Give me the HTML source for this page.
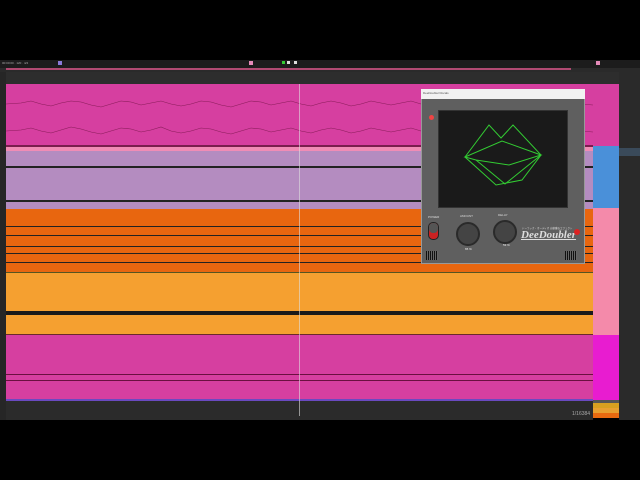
<!DOCTYPE html>
<html><head><meta charset="utf-8"><style>
*{margin:0;padding:0;box-sizing:border-box}
body{width:640px;height:480px;background:#000;position:relative;overflow:hidden;font-family:"Liberation Sans","Noto Sans CJK JP",sans-serif}
.a{position:absolute}
.t{font-size:3px;color:#aaa}
</style></head><body>
<div class="a" style="left:0;top:60px;width:640px;height:8px;background:#1c1c1c"></div>
<div class="a t" style="left:2px;top:61px">00:00:00 · 120 · 4/4</div>
<div class="a" style="left:58px;top:61px;width:4px;height:4px;background:#8a7ad8"></div>
<div class="a" style="left:249px;top:61px;width:4px;height:4px;background:#e48ab8"></div>
<div class="a" style="left:282px;top:61px;width:3px;height:3px;background:#3c3"></div>
<div class="a" style="left:287px;top:61px;width:3px;height:3px;background:#ddd"></div>
<div class="a" style="left:294px;top:61px;width:3px;height:3px;background:#ddd"></div>
<div class="a" style="left:596px;top:61px;width:4px;height:4px;background:#e48ab8"></div>
<div class="a" style="left:0;top:68px;width:640px;height:4px;background:#2a2a2a"></div>
<div class="a" style="left:6px;top:68px;width:565px;height:2px;background:#b04a72"></div>
<div class="a" style="left:0;top:72px;width:640px;height:12px;background:#2d2d2d"></div>
<div class="a" style="left:0;top:72px;width:6px;height:348px;background:#262626"></div>
<div class="a" style="left:6px;top:84px;width:587px;height:62px;background:#d63fa0"></div>
<svg class="a" style="left:6px;top:84px" width="587" height="62"><path d="M0 20 L15 19 L25 17 L35 20 L45 22 L55 19 L65 17 L75 18 L85 21 L95 23 L105 20 L115 17 L125 18 L135 21 L145 19 L155 17 L165 20 L175 22 L185 20 L195 17 L205 18 L215 21 L225 23 L235 20 L245 17 L255 18 L265 21 L275 19 L285 17 L295 20 L305 22 L315 19 L325 17 L335 19 L345 22 L355 20 L365 17 L375 19 L385 21 L395 19 L405 17 L415 20 L425 22 L435 19 L445 17 L455 20 L465 22 L475 19 L485 17 L495 19 L505 21 L515 19 L525 17 L535 20 L545 22 L555 19 L565 17 L575 20 L587 21" stroke="#8a1d5a" stroke-width=".6" fill="none"/><path d="M0 47 L15 46 L25 44 L35 47 L45 49 L55 46 L65 43 L75 45 L85 48 L95 50 L105 47 L115 44 L125 45 L135 48 L145 46 L155 43 L165 47 L175 49 L185 47 L195 44 L205 45 L215 48 L225 50 L235 47 L245 44 L255 45 L265 48 L275 46 L285 44 L295 47 L305 49 L315 46 L325 44 L335 46 L345 49 L355 47 L365 44 L375 46 L385 48 L395 46 L405 44 L415 47 L425 49 L435 46 L445 44 L455 47 L465 49 L475 46 L485 44 L495 46 L505 48 L515 46 L525 44 L535 47 L545 49 L555 46 L565 44 L575 47 L587 48" stroke="#8a1d5a" stroke-width=".6" fill="none"/></svg>
<div class="a" style="left:6px;top:145px;width:587px;height:2px;background:#7a1e4e"></div>
<div class="a" style="left:6px;top:147px;width:587px;height:4px;background:#f08cb5"></div>
<div class="a" style="left:6px;top:151px;width:587px;height:58px;background:#b48cc0"></div>
<div class="a" style="left:6px;top:166px;width:587px;height:2px;background:#222"></div>
<div class="a" style="left:6px;top:200px;width:587px;height:2px;background:#222"></div>
<div class="a" style="left:6px;top:209px;width:587px;height:64px;background:#e8660f"></div>
<div class="a" style="left:6px;top:226px;width:587px;height:1px;background:#222"></div>
<div class="a" style="left:6px;top:235px;width:587px;height:1px;background:#222"></div>
<div class="a" style="left:6px;top:246px;width:587px;height:1px;background:#222"></div>
<div class="a" style="left:6px;top:253px;width:587px;height:1px;background:#222"></div>
<div class="a" style="left:6px;top:262px;width:587px;height:1px;background:#222"></div>
<div class="a" style="left:6px;top:272px;width:587px;height:1px;background:#552"></div>
<div class="a" style="left:6px;top:273px;width:587px;height:62px;background:#f5a030"></div>
<div class="a" style="left:6px;top:311px;width:587px;height:4px;background:#1a1a1a"></div>
<div class="a" style="left:6px;top:334px;width:587px;height:1px;background:#6a2a2a"></div>
<div class="a" style="left:6px;top:335px;width:587px;height:65px;background:#d63fa0"></div>
<div class="a" style="left:6px;top:374px;width:587px;height:1px;background:#6a1040"></div>
<div class="a" style="left:6px;top:380px;width:587px;height:1px;background:#6a1040"></div>
<div class="a" style="left:6px;top:399px;width:587px;height:2px;background:#6a4ac0"></div>
<div class="a" style="left:6px;top:401px;width:587px;height:19px;background:#2b2b2b"></div>
<div class="a t" style="left:572px;top:411px;font-size:5px">1/16384</div>
<div class="a" style="left:299px;top:84px;width:1px;height:332px;background:#ddd;opacity:.6"></div>
<div class="a" style="left:593px;top:84px;width:26px;height:62px;background:#d63fa0"></div>
<div class="a" style="left:593px;top:146px;width:26px;height:62px;background:#4a90d9"></div>
<div class="a" style="left:593px;top:208px;width:26px;height:64px;background:#f48aaa"></div>
<div class="a" style="left:593px;top:272px;width:26px;height:63px;background:#f48aaa"></div>
<div class="a" style="left:593px;top:335px;width:26px;height:65px;background:#e81cd0"></div>
<div class="a" style="left:593px;top:400px;width:26px;height:3px;background:#555"></div>
<div class="a" style="left:593px;top:403px;width:26px;height:5px;background:#d8a020"></div>
<div class="a" style="left:593px;top:408px;width:26px;height:5px;background:#e8a030"></div>
<div class="a" style="left:593px;top:413px;width:26px;height:5px;background:#e86a10"></div>
<div class="a" style="left:619px;top:72px;width:21px;height:348px;background:#2a2a2a"></div>
<div class="a" style="left:619px;top:148px;width:21px;height:8px;background:#3a4a5a"></div>
<div class="a" style="left:421px;top:89px;width:164px;height:175px;background:#5f5f5f;border:1px solid #999"></div>
<div class="a" style="left:421px;top:89px;width:164px;height:10px;background:#f2f2f2"></div>
<div class="a t" style="left:423px;top:91px;color:#555">DeeDoubler/Vocals</div>
<div class="a" style="left:438px;top:110px;width:130px;height:98px;background:#1a1a1a;border:1px solid #333"></div>
<svg class="a" style="left:438px;top:110px" width="130" height="98"><g stroke="#3c3" stroke-width="1" fill="none"><path d="M27 47 L51 15 L63 28 L75 15 L103 45 L84 70 L58 75 L27 47 Z"/><path d="M27 47 L64 31 L103 45 L71 55 L38 50 Z"/><path d="M38 50 L67 74 L103 45"/></g></svg>
<div class="a" style="left:429px;top:115px;width:5px;height:5px;border-radius:50%;background:#e44"></div>
<div class="a t" style="left:428px;top:215px;color:#ddd">POWER</div>
<div class="a t" style="left:460px;top:214px;color:#ddd">AMOUNT</div>
<div class="a t" style="left:498px;top:213px;color:#ddd">DELAY</div>
<div class="a" style="left:428px;top:222px;width:11px;height:18px;border-radius:5px;background:#c22;border:1px solid #222"></div>
<div class="a" style="left:429px;top:223px;width:9px;height:10px;border-radius:4px;background:#555"></div>
<div class="a" style="left:456px;top:222px;width:24px;height:24px;border-radius:50%;background:#444;border:2px solid #2a2a2a"></div>
<div class="a" style="left:493px;top:220px;width:24px;height:24px;border-radius:50%;background:#444;border:2px solid #2a2a2a"></div>
<div class="a t" style="left:465px;top:247px;color:#eee">65 %</div>
<div class="a t" style="left:503px;top:243px;color:#eee">53 %</div>
<div class="a t" style="left:522px;top:226px;color:#ddd;font-size:2.5px">ドーラック・オーディオ 自動重ねエフェクト</div>
<div class="a" style="left:521px;top:229px;font-family:'Liberation Serif',serif;font-style:italic;font-weight:bold;font-size:11px;color:#ddd;text-decoration:underline">DeeDoubler</div>
<div class="a" style="left:574px;top:229px;width:6px;height:6px;border-radius:50%;background:#d22"></div>
<div class="a" style="left:426px;top:251px;width:12px;height:9px;background:repeating-linear-gradient(90deg,#111 0 1px,#666 1px 2px)"></div>
<div class="a" style="left:565px;top:251px;width:12px;height:9px;background:repeating-linear-gradient(90deg,#111 0 1px,#666 1px 2px)"></div>
</body></html>
